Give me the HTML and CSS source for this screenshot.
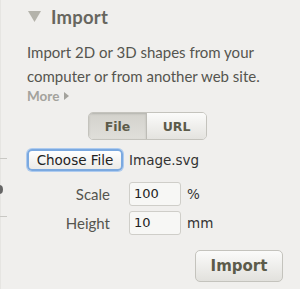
FILE: index.html
```html
<!DOCTYPE html>
<html>
<head>
<meta charset="utf-8">
<link rel="stylesheet" href="styles.css">
</head>
<body>
<div class="edge">
  <span class="tick t1"></span>
  <span class="knob"></span>
  <span class="tick t2"></span>
</div>
<div class="panel">
  <div class="head">
    <svg class="tri" width="13" height="11" viewBox="0 0 13 11"><path d="M0 0H13L6.5 11Z" fill="#b4b3ab"/></svg>
    <span class="title">Import</span>
  </div>
  <p class="desc">Import 2D or 3D shapes from your computer or from another web site.</p>
  <div class="more">More <svg width="5" height="8" viewBox="0 0 5 8"><path d="M0 0L5 4L0 8Z" fill="#a3a29c"/></svg></div>
  <div class="seg">
    <span class="seg-btn on">File</span>
    <span class="seg-btn">URL</span>
  </div>
  <div class="filerow">
    <span class="choose">Choose File</span>
    <span class="fname">Image.svg</span>
  </div>
  <div class="field">
    <span class="lbl">Scale</span>
    <span class="inp">100</span>
    <span class="unit">%</span>
  </div>
  <div class="field">
    <span class="lbl">Height</span>
    <span class="inp">10</span>
    <span class="unit">mm</span>
  </div>
  <div class="actions">
    <span class="import">Import</span>
  </div>
</div>
</body>
</html>
```
FILE: styles.css
```css
html, body {
  margin: 0;
  padding: 0;
  background: #f0efed;
  width: 300px;
  height: 289px;
  overflow: hidden;
}
body {
  position: relative;
  font-family: Lato, "Open Sans", sans-serif;
  color: #555552;
}
.edge {
  position: absolute;
  left: 0;
  top: 0;
  width: 1px;
  height: 289px;
  background: #e6e5e2;
}
.tick {
  position: absolute;
  left: 0;
  width: 7px;
  height: 1px;
  background: #c9c8c4;
}
.t1 { top: 158px; }
.t2 { top: 216px; }
.knob {
  position: absolute;
  left: -4px;
  top: 185px;
  width: 7px;
  height: 9px;
  border-radius: 50%;
  background: #666;
}
.panel {
  padding: 7px 0 0 28px;
}
.head {
  display: flex;
  align-items: center;
  height: 20px;
}
.tri {
  margin-right: 10px;
  margin-top: -1px;
}
.title {
  font-size: 18.5px;
  font-weight: 700;
  color: #67665f;
  letter-spacing: 0.2px;
}
.desc {
  margin: 13px 0 0 -1px;
  width: 262px;
  font-size: 15px;
  line-height: 24px;
  color: #55554f;
}
.more {
  font-size: 13.5px;
  font-weight: 700;
  color: #a3a29c;
  line-height: 16px;
  margin-top: 0;
  margin-left: -1px;
  display: flex;
  align-items: center;
  gap: 5px;
}
.seg {
  display: flex;
  margin: 8px 0 0 60px;
  width: 119px;
  height: 28px;
  border: 1px solid #c4c3bd;
  border-radius: 5px;
  overflow: hidden;
  box-sizing: border-box;
}
.seg-btn {
  flex: 1;
  display: flex;
  align-items: center;
  justify-content: center;
  font-family: "DejaVu Sans", sans-serif;
  font-weight: 700;
  font-size: 12.5px;
  color: #5c5b4a;
  background: linear-gradient(#fbfbfa, #e4e3df);
}
.seg-btn.on {
  flex: 0 0 57px;
  background: linear-gradient(#d3d2cc, #e0dfda);
  border-right: 1px solid #bdbcb6;
  box-shadow: inset 0 1px 2px rgba(0,0,0,0.15);
}
.filerow {
  display: flex;
  align-items: center;
  margin: 9px 0 0 -1px;
  gap: 6px;
}
.choose {
  width: 96px;
  height: 22px;
  box-sizing: border-box;
  border: 2px solid #7ba9e0;
  border-radius: 5px;
  background: linear-gradient(#ffffff, #ecebe8);
  box-shadow: 0 0 0 1px #aecbef;
  display: flex;
  align-items: center;
  justify-content: center;
  font-family: "DejaVu Sans", sans-serif;
  font-size: 13.5px;
  color: #222;
}
.fname {
  font-family: "DejaVu Sans", sans-serif;
  font-size: 13.5px;
  color: #333;
}
.field {
  display: flex;
  align-items: center;
  margin-top: 5px;
}
.filerow + .field { margin-top: 11px; }
.lbl {
  width: 82px;
  text-align: right;
  font-size: 15px;
  color: #55554f;
  margin-right: 19px;
}
.inp {
  width: 52px;
  height: 24px;
  box-sizing: border-box;
  border: 1px solid #cfcec9;
  border-radius: 3px;
  background: #f7f7f5;
  font-family: "DejaVu Sans", sans-serif;
  font-size: 13px;
  color: #222;
  padding: 3px 0 0 4px;
}
.unit {
  margin-left: 6px;
  font-family: "DejaVu Sans", sans-serif;
  font-size: 13.5px;
  color: #333;
}
.actions {
  display: flex;
  justify-content: flex-end;
  width: 255px;
  margin-top: 15px;
}
.import {
  width: 88px;
  height: 32px;
  box-sizing: border-box;
  border: 1px solid #c4c3bd;
  border-radius: 5px;
  background: linear-gradient(#fbfbfa, #e2e1dd);
  display: flex;
  align-items: center;
  justify-content: center;
  font-family: "DejaVu Sans", sans-serif;
  font-weight: 700;
  font-size: 15px;
  color: #5c5b4a;
}
```
